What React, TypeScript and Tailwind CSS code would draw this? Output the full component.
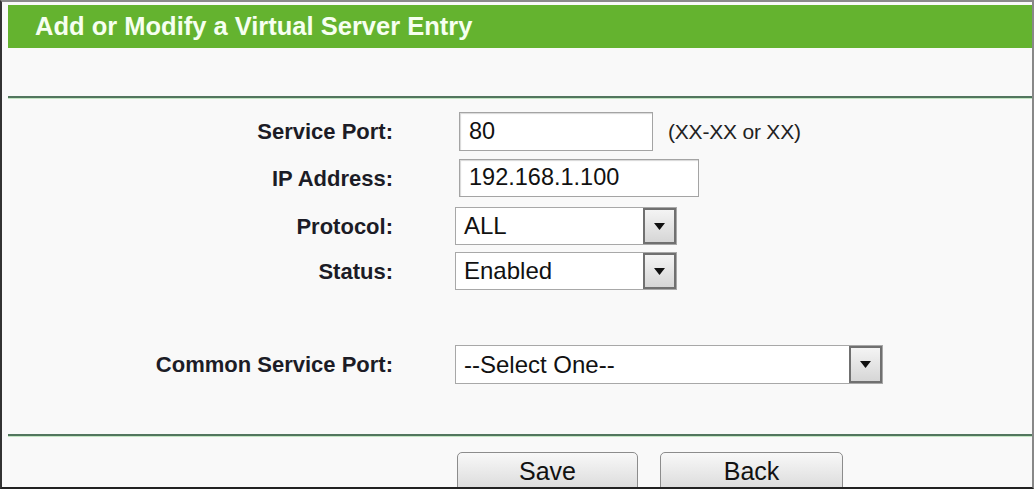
import React from "react";

const font = { fontFamily: '"Liberation Sans", Arial, sans-serif' };

function Arrow() {
  return (
    <div className="h-full w-[33px] shrink-0 border-2 border-[#707070] bg-gradient-to-b from-[#f4f4f4] to-[#d6d6d6] flex items-center justify-center">
      <svg width="11" height="7" viewBox="0 0 11 7">
        <polygon points="0,0 11,0 5.5,7" fill="#111" />
      </svg>
    </div>
  );
}

function Select({ value, width }: { value: string; width: string }) {
  return (
    <div className={`${width} h-full flex border border-[#a8a8a8] bg-white`}>
      <div className="flex-1 flex items-center pl-[8px] text-[24px] text-[#111]">{value}</div>
      <Arrow />
    </div>
  );
}

function TextBox({ value, width }: { value: string; width: string }) {
  return (
    <div className={`${width} h-full ml-[4px] flex items-center pl-[9px] border border-[#a4a4a4] bg-white shadow-[inset_1px_1px_1px_#d8d8d8] text-[23.5px] text-[#111]`}>
      {value}
    </div>
  );
}

function Label({ children }: { children: React.ReactNode }) {
  return (
    <div className="w-[385px] shrink-0 text-right text-[22px] font-bold text-[#1c1c26]">{children}</div>
  );
}

function Divider() {
  return (
    <div>
      <div className="h-[2px] bg-[#52765e]" />
      <div className="h-[1px] bg-[#c4e6c4]" />
    </div>
  );
}

export default function App() {
  return (
    <div
      style={font}
      className="w-[1034px] h-[489px] bg-[#f9f9f9] border-t-2 border-t-[#8a8a8a] border-l-2 border-l-[#333] border-r-2 border-r-[#888] border-b-2 border-b-[#222] overflow-hidden"
    >
      <div className="pl-[6px] pt-[3px]">
        <div className="h-[43px] bg-[#64b32f] flex items-center pl-[27px] text-[25.5px] font-bold text-[#f6fff0]">
          Add or Modify a Virtual Server Entry
        </div>
        <div className="h-[48px]" />
        <Divider />

        <div className="mt-[13px] flex flex-col">
          <div className="h-[39px] flex items-center gap-x-[62px]">
            <Label>Service Port:</Label>
            <div className="h-full flex items-center">
              <TextBox value="80" width="w-[194px]" />
              <span className="ml-[15px] text-[21px] tracking-[-0.2px] text-[#222]">(XX-XX or XX)</span>
            </div>
          </div>
          <div className="mt-[8px] h-[38px] flex items-center gap-x-[62px]">
            <Label>IP Address:</Label>
            <TextBox value="192.168.1.100" width="w-[240px]" />
          </div>
          <div className="mt-[10px] h-[38px] flex items-center gap-x-[62px]">
            <Label>Protocol:</Label>
            <Select value="ALL" width="w-[222px]" />
          </div>
          <div className="mt-[7px] h-[38px] flex items-center gap-x-[62px]">
            <Label>Status:</Label>
            <Select value="Enabled" width="w-[222px]" />
          </div>
          <div className="mt-[55px] h-[39px] flex items-center gap-x-[62px]">
            <Label>Common Service Port:</Label>
            <Select value="--Select One--" width="w-[428px]" />
          </div>
        </div>

        <div className="mt-[50px]">
          <Divider />
        </div>

        <div className="mt-[15px] flex pl-[449px] gap-x-[22px]">
          <button className="w-[181px] h-[40px] pb-[6px] rounded-[5px] border border-[#8c8c8c] bg-gradient-to-b from-[#f8f8f8] to-[#dadada] text-[25px] text-[#111]">
            Save
          </button>
          <button className="w-[183px] h-[40px] pb-[6px] rounded-[5px] border border-[#8c8c8c] bg-gradient-to-b from-[#f8f8f8] to-[#dadada] text-[25px] text-[#111]">
            Back
          </button>
        </div>
      </div>
    </div>
  );
}
